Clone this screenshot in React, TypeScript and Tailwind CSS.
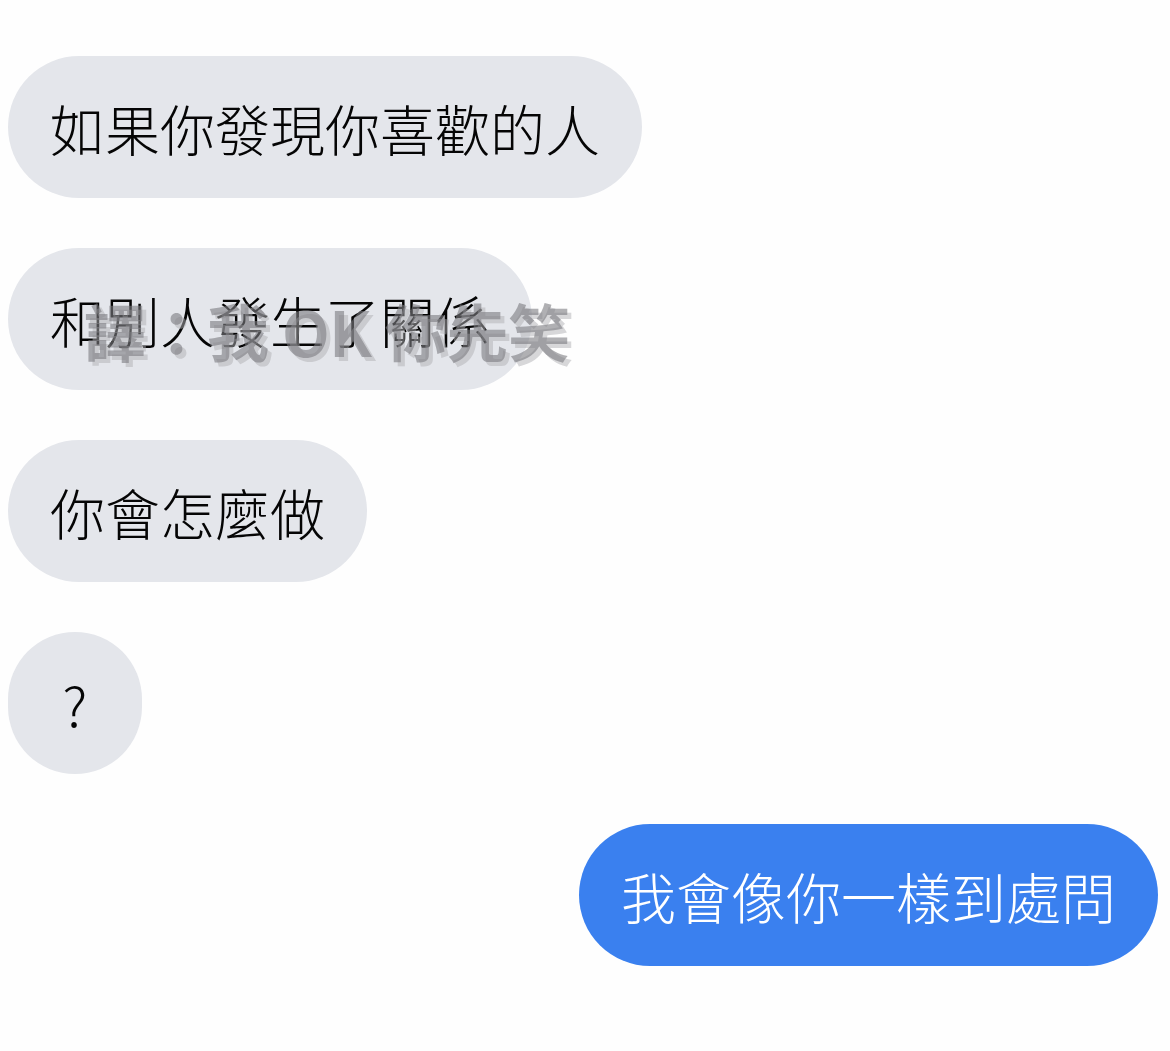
import React from "react";

const font = { fontFamily: '"Noto Sans CJK TC", "Noto Sans CJK SC", sans-serif' };

function Bubble({ text, mine = false, square = false }: { text: string; mine?: boolean; square?: boolean }) {
  return (
    <div
      className={`h-[142px] rounded-full flex items-center text-[55px] leading-none font-light ${
        mine ? "self-end bg-[#3a80ef] text-white" : "self-start bg-[#e4e6eb] text-[#050505]"
      } ${square ? "w-[134px] justify-center" : "px-[42px]"}`}
      style={font}
    >
      {text}
    </div>
  );
}

export default function App() {
  return (
    <div className="relative w-[1170px] h-[1051px] bg-[#fefefe] overflow-hidden">
      <div className="flex flex-col gap-[50px] pt-[56px] pl-[8px] pr-[12px]">
        <Bubble text="如果你發現你喜歡的人" />
        <Bubble text="和別人發生了關係" />
        <Bubble text="你會怎麼做" />
        <Bubble text="?" square />
        <Bubble text="我會像你一樣到處問" mine />
      </div>
      <div
        className="absolute left-[84px] top-[299px] text-[62px] font-bold leading-none tracking-[-0.5px] text-[#7c7c80]/60 whitespace-nowrap [text-shadow:4px_4px_0_rgba(175,175,180,0.5)]"
        style={font}
      >
        譯：我 OK 你先笑
      </div>
    </div>
  );
}
